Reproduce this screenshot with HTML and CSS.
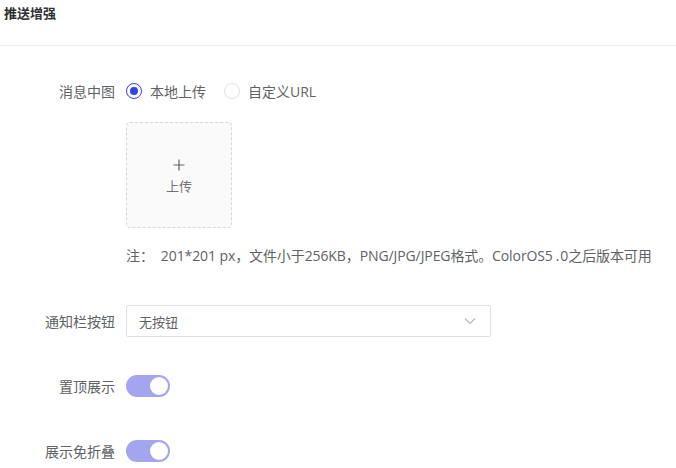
FILE: index.html
```html
<!DOCTYPE html>
<html lang="zh">
<head>
<meta charset="utf-8">
<link rel="stylesheet" href="styles.css">
</head>
<body>
<div class="header"><span class="title">推送增强</span></div>
<div class="form">
  <div class="row row-radio">
    <div class="label">消息中图</div>
    <div class="content">
      <label class="radio checked"><span class="dot"></span><span class="rtext">本地上传</span></label>
      <label class="radio"><span class="dot"></span><span class="rtext">自定义URL</span></label>
    </div>
  </div>
  <div class="row row-upload">
    <div class="label"></div>
    <div class="content">
      <div class="upload">
        <svg class="plus" width="12" height="12" viewBox="0 0 12 12"><path d="M6 0.5V11.5M0.5 6H11.5" stroke="#606266" stroke-width="1.2" fill="none"/></svg>
        <span class="utext">上传</span>
      </div>
    </div>
  </div>
  <div class="row row-note">
    <div class="label"></div>
    <div class="content note">注：&nbsp; 201*201 px，文件小于256KB，PNG/JPG/JPEG格式。ColorOS5<span class="wide">.</span>0之后版本可用</div>
  </div>
  <div class="row row-select">
    <div class="label">通知栏按钮</div>
    <div class="content">
      <div class="select"><span>无按钮</span>
        <svg width="12" height="8" viewBox="0 0 12 8"><path d="M1 1.5L6 6.5L11 1.5" stroke="#b4b6bc" stroke-width="1.1" fill="none"/></svg>
      </div>
    </div>
  </div>
  <div class="row row-switch">
    <div class="label">置顶展示</div>
    <div class="content"><span class="switch"><span class="knob"></span></span></div>
  </div>
  <div class="row row-switch">
    <div class="label">展示免折叠</div>
    <div class="content"><span class="switch"><span class="knob"></span></span></div>
  </div>
</div>
</body>
</html>
```
FILE: styles.css
```css
* { box-sizing: border-box; }
body {
  margin: 0;
  background: #fff;
  font-family: "Open Sans", "Noto Sans CJK SC", sans-serif;
  font-size: 14px;
  color: #606266;
}
.header {
  height: 46px;
  border-bottom: 1px solid #ebeef5;
  padding: 3px 0 0 4px;
}
.title {
  font-weight: bold;
  font-size: 13px;
  color: #303133;
  line-height: 18px;
}
.form { padding-top: 29px; }
.row {
  display: grid;
  grid-template-columns: 115px 1fr;
  column-gap: 11px;
  align-items: center;
}
.label { text-align: right; color: #606266; }
.row-radio { height: 32px; }
.content { display: flex; align-items: center; }
.radio { display: flex; align-items: center; margin-right: 18px; cursor: pointer; }
.dot {
  width: 16px; height: 16px; border-radius: 50%;
  border: 1px solid #dcdfe6; background: #fff;
  display: flex; align-items: center; justify-content: center;
}
.radio.checked .dot { border-color: #3342e6; }
.radio.checked .dot::after {
  content: ""; width: 8px; height: 8px; border-radius: 50%; background: #3342e6;
}
.rtext { margin-left: 8px; }
.row-upload { margin-top: 15px; }
.upload {
  width: 106px; height: 106px;
  border: 1px dashed #d4d6da; border-radius: 4px;
  background: #fafafa;
  display: flex; flex-direction: column; align-items: center; justify-content: center;
  gap: 7px;
  padding-top: 2px;
}
.utext { font-size: 13px; color: #707276; line-height: 16px; }
.row-note { margin-top: 18px; line-height: 20px; }
.note { font-size: 14px; color: #606266; white-space: nowrap; letter-spacing: -0.1px; }
.wide { padding: 0 1px 0 3px; }
.row-select { margin-top: 39px; }
.select {
  width: 365px; height: 32px;
  border: 1px solid #dcdfe6; border-radius: 2px;
  display: flex; align-items: center; justify-content: space-between;
  padding: 0 14px 0 12px;
  font-size: 13px; color: #606266;
}
.row-switch { margin-top: 33px; height: 32px; }
.switch {
  width: 44px; height: 22px; border-radius: 11px;
  background: #a3a6ef;
  display: flex; align-items: center; justify-content: flex-end;
  padding: 0 2px;
}
.knob { width: 18px; height: 18px; border-radius: 50%; background: #fff; }
```
